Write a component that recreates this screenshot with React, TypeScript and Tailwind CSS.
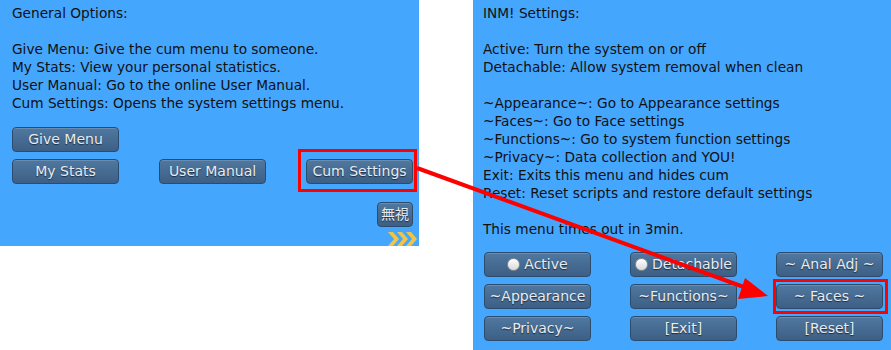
import React from "react";

const FONT = { fontFamily: '"DejaVu Sans", "Noto Sans CJK JP", sans-serif' };

type BtnProps = { label: string; radio?: boolean; small?: boolean };

function Btn({ label, radio, small }: BtnProps) {
  return (
    <div
      className={`flex h-[25px] items-center justify-center gap-[4px] rounded-[4px] border border-[#2c4c6e] bg-gradient-to-b from-[#5078a0] to-[#3d5f85] text-[14px] text-[#e8ecf0] shadow-[inset_0_1px_0_rgba(255,255,255,0.15)] [text-shadow:0_1px_1px_#1c2c40] ${
        small ? "w-[36px]" : "w-[107px]"
      }`}
    >
      {radio && (
        <span className="inline-block h-[13px] w-[13px] shrink-0 rounded-full border border-[#8a8f96] bg-gradient-to-b from-white to-[#d8d8d8]" />
      )}
      <span className="whitespace-nowrap">{label}</span>
    </div>
  );
}

function Chevrons() {
  return (
    <svg width="29" height="16" viewBox="0 0 29 16">
      {[0, 9, 18].map((x) => (
        <polygon
          key={x}
          points={`${x},1 ${x + 5},1 ${x + 11},8 ${x + 5},15 ${x},15 ${x + 6},8`}
          fill="#f2c443"
        />
      ))}
    </svg>
  );
}

export default function App() {
  return (
    <div className="relative h-[350px] w-[891px] overflow-hidden bg-white text-[#111]" style={FONT}>
      <div className="flex items-start">
        {/* general options */}
        <section className="flex h-[246px] w-[419px] flex-col bg-[#45a6fe] pl-[12px] pt-[4px]">
          <div className="text-[13.7px] leading-[18px]">
            <p>General Options:</p>
            <p>&nbsp;</p>
            <p>Give Menu: Give the cum menu to someone.</p>
            <p>My Stats: View your personal statistics.</p>
            <p>User Manual: Go to the online User Manual.</p>
            <p>Cum Settings: Opens the system settings menu.</p>
          </div>
          <div className="mt-[15px] grid w-[401px] grid-cols-[107px_107px_107px] gap-x-[40px] gap-y-[7px]">
            <Btn label="Give Menu" />
            <div />
            <div />
            <Btn label="My Stats" />
            <Btn label="User Manual" />
            <Btn label="Cum Settings" />
          </div>
          <div className="mt-[18px] flex w-[401px] justify-end">
            <Btn label="無視" small />
          </div>
          <div className="mt-[4px] flex justify-end pr-[2px]">
            <Chevrons />
          </div>
        </section>

        {/* settings */}
        <section className="ml-[54px] flex h-[350px] w-[418px] flex-col bg-[#45a6fe] pl-[10px] pt-[4px]">
          <div className="text-[13.7px] leading-[18px]">
            <p>INM! Settings:</p>
            <p>&nbsp;</p>
            <p>Active: Turn the system on or off</p>
            <p>Detachable: Allow system removal when clean</p>
            <p>&nbsp;</p>
            <p>~Appearance~: Go to Appearance settings</p>
            <p>~Faces~: Go to Face settings</p>
            <p>~Functions~: Go to system function settings</p>
            <p>~Privacy~: Data collection and YOU!</p>
            <p>Exit: Exits this menu and hides cum</p>
            <p>Reset: Reset scripts and restore default settings</p>
            <p>&nbsp;</p>
            <p>This menu times out in 3min.</p>
          </div>
          <div className="ml-[1px] mt-[14px] grid grid-cols-[107px_107px_107px] gap-x-[39px] gap-y-[7px]">
            <Btn label="Active" radio />
            <Btn label="Detachable" radio />
            <Btn label="~ Anal Adj ~" />
            <Btn label="~Appearance" />
            <Btn label="~Functions~" />
            <Btn label="~ Faces ~" />
            <Btn label="~Privacy~" />
            <Btn label="[Exit]" />
            <Btn label="[Reset]" />
          </div>
        </section>
      </div>

      {/* annotations */}
      <div className="absolute left-[298px] top-[149px] h-[43px] w-[119px] border-[3px] border-[#ff0000]" />
      <div className="absolute left-[773px] top-[279px] h-[35px] w-[115px] border-[3px] border-[#ff0000]" />
      <svg className="pointer-events-none absolute left-0 top-0" width="891" height="350">
        <line x1="417" y1="168" x2="752" y2="290" stroke="#ff0000" strokeWidth="4" />
        <polygon points="768,296 745,278 738,299" fill="#ff0000" />
      </svg>
    </div>
  );
}
